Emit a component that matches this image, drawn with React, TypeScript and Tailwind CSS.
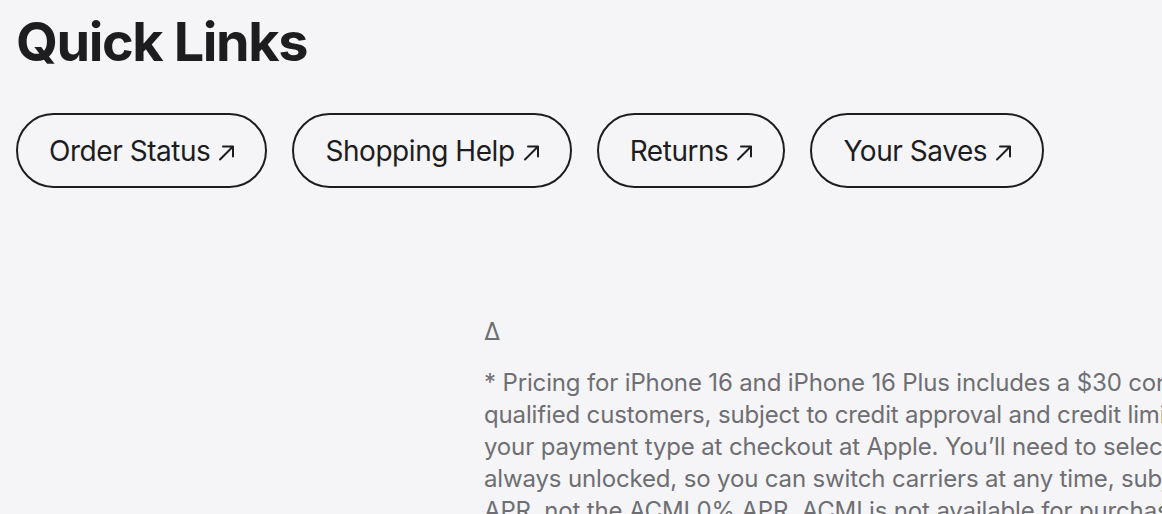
import React from "react";

const links = ["Order Status", "Shopping Help", "Returns", "Your Saves"];

const footnote = [
  "* Pricing for iPhone 16 and iPhone 16 Plus includes a $30 connectivity discount that requires activation with AT&T, Boost Mobile, T-Mobile, or Verizon. Financing available to",
  "qualified customers, subject to credit approval and credit limit, and requires you to select Citizens One Apple iPhone Payments or Apple Card Monthly Installments (ACMI) as",
  "your payment type at checkout at Apple. You’ll need to select AT&T, Boost Mobile, T-Mobile, or Verizon as your carrier when you check out. An iPhone purchased with",
  "always unlocked, so you can switch carriers at any time, subject to your carrier’s terms. Taxes and shipping not included in ACMI and are subject to your card’s variable",
  "APR, not the ACMI 0% APR. ACMI is not available for purchases made online at special storefronts.",
];

const Arrow = () => (
  <svg width="17" height="17" viewBox="0 0 17 17" fill="none" className="ml-[8px] mt-[3px]">
    <path d="M2 15.5 L15 2.5 M5 2.5 H15 V12.5" stroke="#1d1d1f" strokeWidth="2" strokeLinecap="round" strokeLinejoin="round" />
  </svg>
);

const App = () => {
  return (
    <div
      className="h-[514px] w-full overflow-hidden bg-[#f5f5f7] text-[#1d1d1f]"
      style={{ fontFamily: "Inter, 'Noto Sans', sans-serif" }}
    >
      <div className="px-[16px] pt-[8px]">
        <h1 className="text-[54px] font-bold leading-[68px] tracking-[-1.4px]">Quick Links</h1>

        <div className="mt-[37px] flex gap-[25px]">
          {links.map((l) => (
            <a
              key={l}
              className="flex h-[75px] items-center rounded-full border-2 border-[#1d1d1f] pl-[31px] pr-[30px] text-[28px] leading-none tracking-[-0.45px]"
            >
              {l}
              <Arrow />
            </a>
          ))}
        </div>
      </div>

      <div className="mt-[128px] pl-[484px] text-[24px] leading-[32px] tracking-[-0.15px] text-[#6e6e73]">
        <p>Δ</p>
        <div className="mt-[19px]">
          {footnote.map((line, i) => (
            <p key={i} className="whitespace-nowrap">
              {line}
            </p>
          ))}
        </div>
      </div>
    </div>
  );
};

export default App;
